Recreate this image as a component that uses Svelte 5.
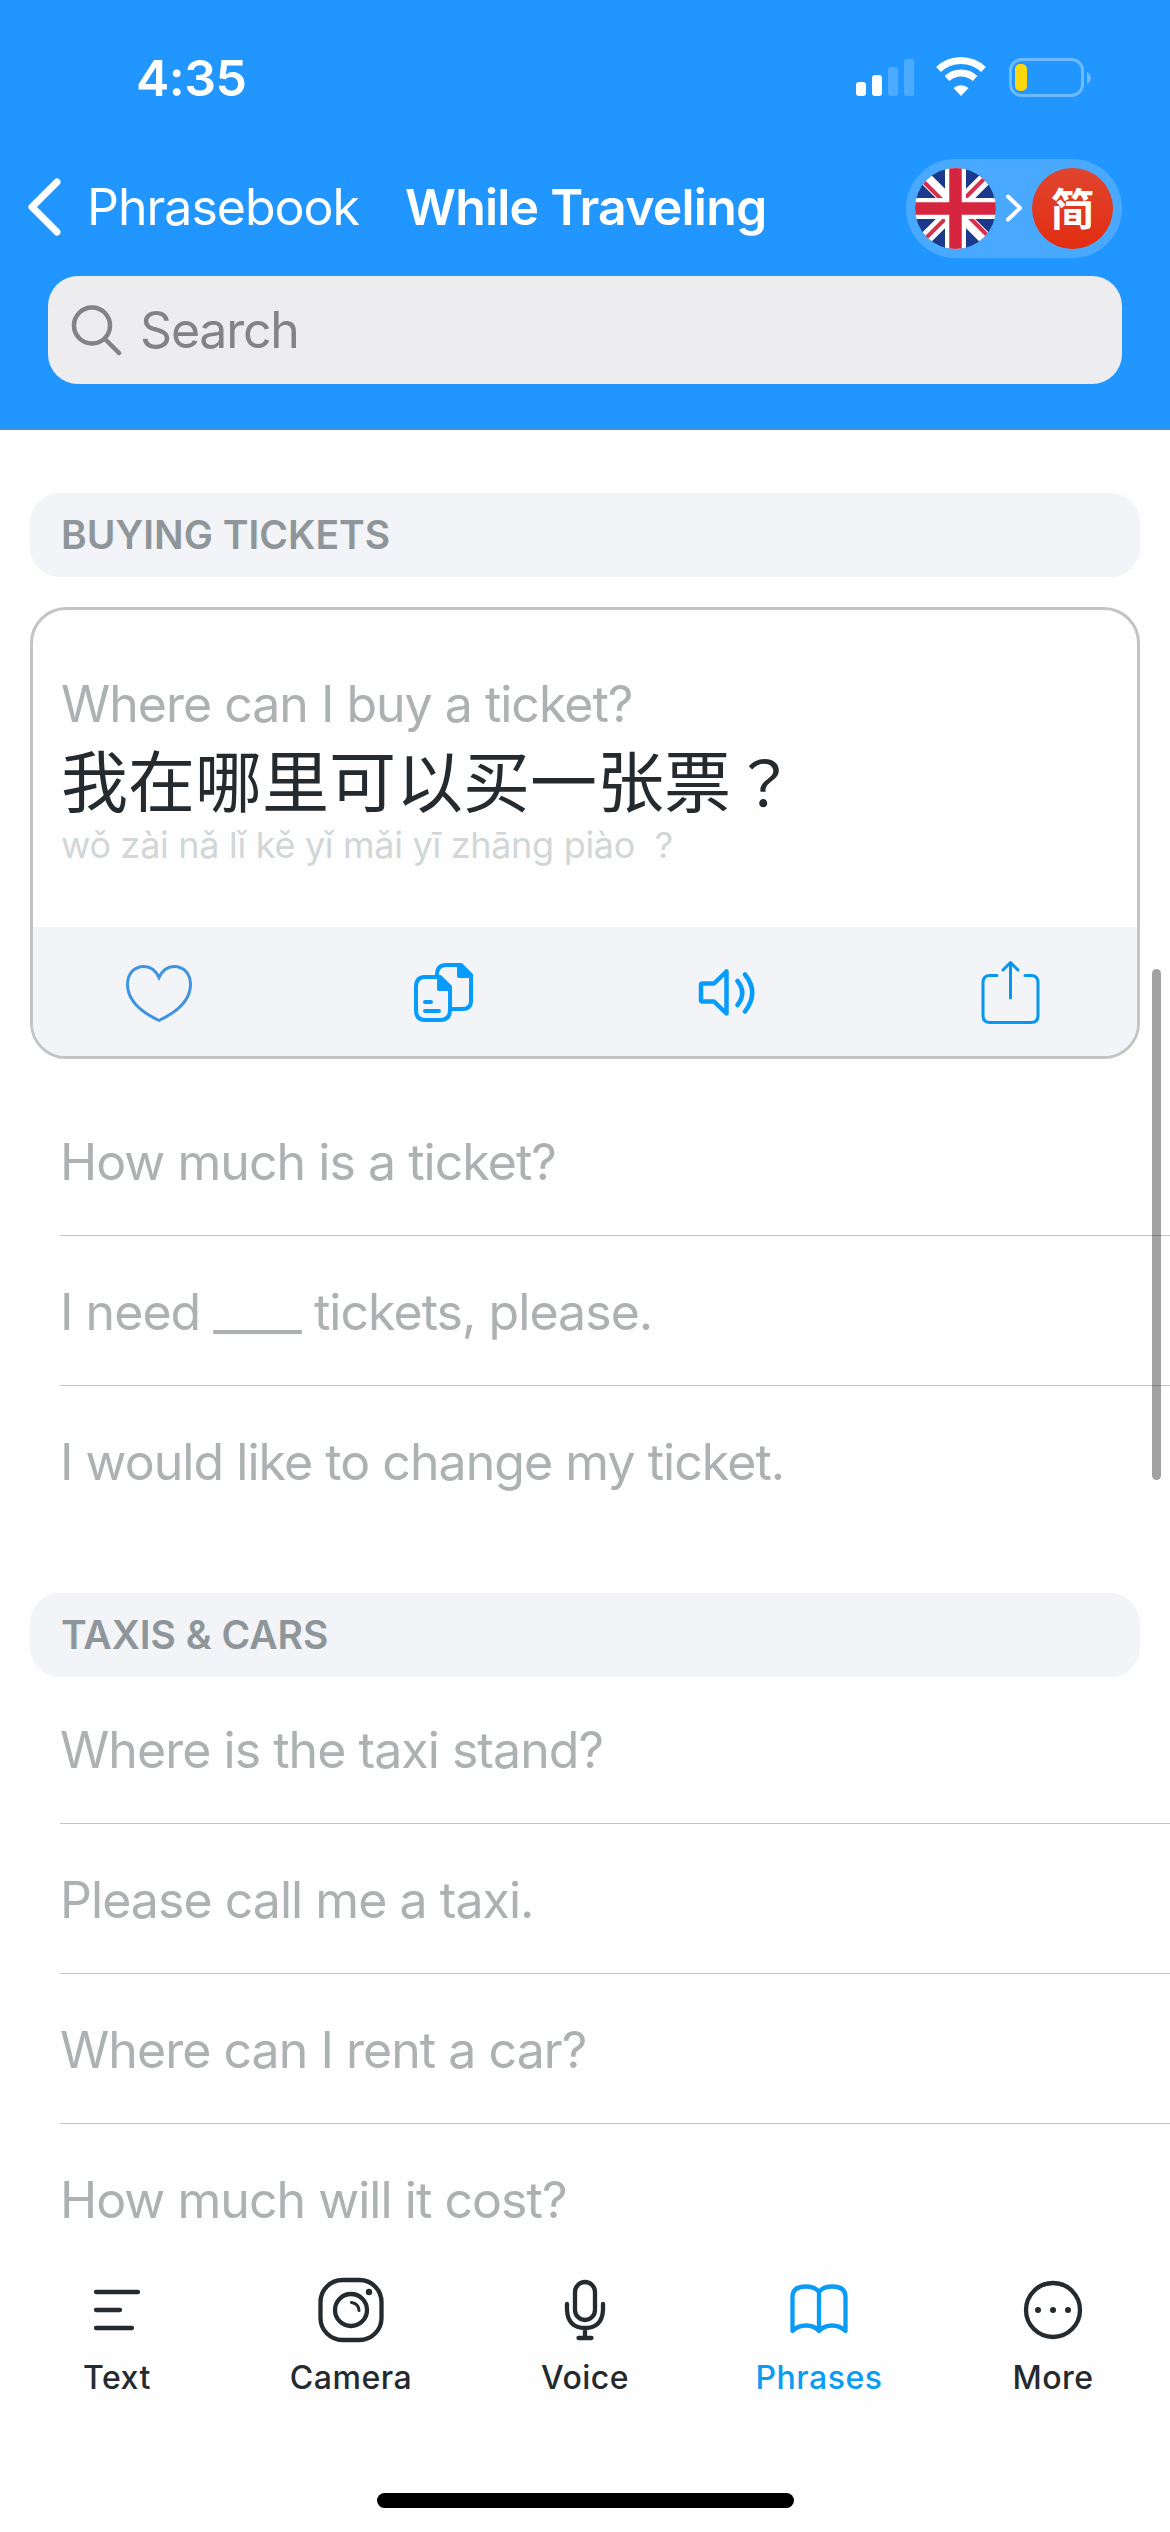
<script>
  const sections = [
    {
      title: 'Buying tickets',
      card: {
        text: 'Where can I buy a ticket?',
        translation: '我在哪里可以买一张票',
        mark: '？',
        pinyin: 'wǒ zài nǎ lǐ kě yǐ mǎi yī zhāng piào\u00a0\u00a0?',
      },
      phrases: ['How much is a ticket?', 'I need ____ tickets, please.', 'I would like to change my ticket.'],
    },
    {
      title: 'Taxis & cars',
      card: null,
      phrases: ['Where is the taxi stand?', 'Please call me a taxi.', 'Where can I rent a car?', 'How much will it cost?'],
    },
  ];

  const tabs = ['Text', 'Camera', 'Voice', 'Phrases', 'More'];
  let activeTab = $state('Phrases');
  let query = $state('');
</script>

<div class="screen">
  <header>
    <div class="status">
      <span class="time">4:35</span>
      <svg class="status-icons" width="240" height="44" viewBox="0 0 240 44">
        <rect x="1" y="26" width="10" height="14" rx="3" fill="#fff" />
        <rect x="17" y="19" width="10" height="21" rx="3" fill="#fff" />
        <rect x="33" y="11" width="10" height="29" rx="3" fill="#4dabff" />
        <rect x="49" y="3" width="10" height="37" rx="3" fill="#4dabff" />
        <g fill="none" stroke="#fff" stroke-width="7">
          <path d="M83.500 13.500a32.500 32.500 0 0 1 45 0" />
          <path d="M92 22.500a20.500 20.500 0 0 1 28 0" />
        </g>
        <path d="M98.500 32a11.500 11.500 0 0 1 15 0l-7.500 8z" fill="#fff" />
        <rect x="155.500" y="3.500" width="72" height="36" rx="11" fill="none" stroke="#6ebaff" stroke-width="3" />
        <path d="M232 16c5 1.500 5 10.500 0 12z" fill="#6ebaff" />
        <rect x="160" y="8" width="12" height="27" rx="5" fill="#ffd60a" />
      </svg>
    </div>

    <nav>
      <button class="back">
        <svg width="40" height="64" viewBox="0 0 40 64">
          <path d="M32 7 7 32l25 25" fill="none" stroke="#fff" stroke-width="7" stroke-linecap="round" stroke-linejoin="round" />
        </svg>
        <span>Phrasebook</span>
      </button>
      <h1>While Traveling</h1>
      <button class="languages" aria-label="Languages">
        <svg width="81" height="81" viewBox="0 0 81 81">
          <clipPath id="round"><circle cx="40.500" cy="40.500" r="40.500" /></clipPath>
          <g clip-path="url(#round)">
            <rect width="81" height="81" fill="#1b3a8c" />
            <path d="M0 0 81 81M81 0 0 81" stroke="#fff" stroke-width="13" />
            <path d="M4 9 32 37M80 0 47 33M1 80 34 47M77 72 49 44" stroke="#d8304a" stroke-width="4" />
            <path d="M40.500 0v81M0 40.500h81" stroke="#fff" stroke-width="21" />
            <path d="M40.500 0v81M0 40.500h81" stroke="#d6263f" stroke-width="12.500" />
          </g>
        </svg>
        <svg width="18" height="30" viewBox="0 0 18 30">
          <path d="M3 2.500l12 11.500L3 25.500" fill="none" stroke="#fff" stroke-width="4" stroke-linecap="round" stroke-linejoin="round" />
        </svg>
        <span class="chinese">简</span>
      </button>
    </nav>

    <label class="search">
      <svg width="52" height="52" viewBox="0 0 52 52" fill="none" stroke="#838387" stroke-width="4.500" stroke-linecap="round">
        <circle cx="21" cy="21.500" r="18" />
        <path d="M34 35l14 14" />
      </svg>
      <input bind:value={query} placeholder="Search" />
    </label>
  </header>

  <main>
    {#each sections as section}
      <section>
        <h2>{section.title}</h2>
        {#if section.card}
          <article>
            <div class="body">
              <p class="question">{section.card.text}</p>
              <p class="translation" lang="zh-CN">{section.card.translation}<span class="mark" lang="ja">{section.card.mark}</span></p>
              <p class="pinyin">{section.card.pinyin}</p>
            </div>
            <div class="actions">
              <svg width="68" height="68" viewBox="0 0 68 68" fill="none" stroke="#3e94de" stroke-width="3">
                <path d="M34 19.500C30 11 24.500 8.500 19 8.500 9 8.500 2.500 16 2.500 26.500 2.500 41 15 53.500 34 62.500 53 53.500 65.500 41 65.500 26.500 65.500 16 59 8.500 49 8.500 43.500 8.500 38 11 34 19.500z" />
              </svg>
              <svg width="68" height="68" viewBox="0 0 68 68" fill="none" stroke="#069cfb" stroke-width="4" stroke-linecap="round" stroke-linejoin="round">
                <path d="M28 18v-1q0-10 9-10h15l10 10v26q0 8-9 8H42" />
                <path d="M50 7v11h12z" fill="#069cfb" />
                <path d="M31 19H16Q7 19 7 29v23q0 10 9 10h15q10 0 10-10V29z" />
                <path d="M30 19v12h11V29z" fill="#069cfb" />
                <path d="M16 44h6M16 53h14" />
              </svg>
              <svg width="68" height="68" viewBox="0 0 68 68" fill="none" stroke="#069cfb" stroke-width="4.500" stroke-linecap="round" stroke-linejoin="round">
                <path d="M10.500 25.500H22L34.500 13.500v42L22 43.500H10.500q-1.500 0-1.500-1.500V27q0-1.500 1.500-1.500z" />
                <path d="M45.500 23q9.500 12 0 24M53 16.500q14.500 18 0 37" />
              </svg>
              <svg width="68" height="68" viewBox="0 0 68 68" fill="none" stroke="#0797ee" stroke-width="3" stroke-linecap="round" stroke-linejoin="round">
                <path d="M21 17.500h-7q-7 0-7 7v33q0 7 7 7h41q7 0 7-7v-33q0-7-7-7h-6" />
                <path d="M34.500 40V5M27 12l7.500-7.500 7.500 7.500" />
              </svg>
            </div>
          </article>
        {/if}
        <ul>
          {#each section.phrases as phrase}
            <li>{phrase}</li>
          {/each}
        </ul>
      </section>
    {/each}
    <div class="scrollbar"></div>
  </main>

  <footer>
    <div class="tabs">
      {#each tabs as tab}
        <button class:active={tab === activeTab} onclick={() => (activeTab = tab)}>
          <svg width="70" height="70" viewBox="0 0 70 70" fill="none" stroke="currentColor" stroke-width="4.300" stroke-linecap="round" stroke-linejoin="round">
            {#if tab === 'Text'}
              <path d="M14 17h42M14 35h24M14 53h36" />
            {:else if tab === 'Camera'}
              <rect x="4.500" y="5" width="61" height="60" rx="22" />
              <circle cx="35" cy="35" r="16" />
              <path d="M35.500 27.500q7 1 7.500 8" stroke-width="3" />
              <circle cx="53" cy="17" r="3.200" fill="currentColor" stroke="none" />
            {:else if tab === 'Voice'}
              <rect x="25" y="7" width="20" height="38" rx="10" />
              <path d="M17 29v6q1 18 18 18t18-18v-6M35 54v9M28.500 63h13" />
            {:else if tab === 'Phrases'}
              <path d="M35 17q-4-5.500-13-5.500-13.500 0-13.500 10V56q5-5.500 13.500-5.500T35 56q5-5.500 13-5.500T61.500 56V21.500q0-10-13.500-10-9 0-13 5.500v39" />
            {:else}
              <circle cx="35" cy="35" r="27" />
              <g fill="currentColor" stroke="none">
                <circle cx="20" cy="35" r="3" />
                <circle cx="35" cy="35" r="3" />
                <circle cx="50" cy="35" r="3" />
              </g>
            {/if}
          </svg>
          <span>{tab}</span>
        </button>
      {/each}
    </div>
    <div class="home"></div>
  </footer>
</div>

<style>
  :global(body) {
    margin: 0;
    background: #fff;
  }

  .screen {
    display: flex;
    flex-direction: column;
    width: 1170px;
    height: 2532px;
    overflow: hidden;
    background: #fefefe;
    color: #242a2e;
    font-family: Inter, 'Noto Sans CJK SC', sans-serif;
  }

  button {
    border: 0;
    padding: 0;
    background: none;
    color: inherit;
    font: inherit;
  }

  header {
    box-sizing: border-box;
    flex: none;
    height: 430px;
    border-bottom: 2px solid #4391e0;
    background: #2196ff;
    color: #fff;
  }

  .status {
    display: flex;
    justify-content: space-between;
    align-items: center;
    height: 156px;
    padding: 0 75px 0 136px;
  }

  .time {
    font-size: 50px;
    font-weight: 600;
    letter-spacing: -0.5px;
  }

  nav {
    display: grid;
    grid-template-columns: 405px 1fr auto;
    align-items: center;
    height: 105px;
    padding-right: 48px;
  }

  .back {
    display: flex;
    align-items: center;
    gap: 22px;
    padding: 0 0 4px 25px;
    font-size: 50px;
    letter-spacing: -1px;
  }

  h1 {
    margin: 0;
    padding-bottom: 4px;
    font-size: 50px;
    font-weight: 600;
    letter-spacing: -0.8px;
    white-space: nowrap;
  }

  .languages {
    display: flex;
    align-items: center;
    justify-content: space-between;
    box-sizing: border-box;
    width: 216px;
    height: 99px;
    padding: 0 9px;
    border-radius: 50px;
    background: #48a9ff;
  }

  .chinese {
    width: 81px;
    height: 81px;
    border-radius: 50%;
    background: linear-gradient(#e0452f, #e22c10);
    font: bold 44px/79px 'Noto Sans CJK SC', sans-serif;
    text-align: center;
  }

  .search {
    display: flex;
    align-items: center;
    gap: 17px;
    height: 108px;
    margin: 15px 48px 0;
    padding-left: 23px;
    border-radius: 30px;
    background: #ededef;
  }

  input {
    flex: 1;
    border: 0;
    padding: 0;
    outline: 0;
    background: none;
    font: 50px Inter, sans-serif;
    letter-spacing: -1.200px;
  }

  input::placeholder {
    color: #838387;
    opacity: 1;
  }

  main {
    position: relative;
    flex: 1;
    min-height: 0;
    overflow: hidden;
    padding-top: 63px;
  }

  h2 {
    height: 84px;
    margin: 0 30px;
    padding-left: 31px;
    border-radius: 30px;
    background: #f2f4f8;
    color: #8f9699;
    font-size: 39px;
    font-weight: 600;
    line-height: 84px;
    text-transform: uppercase;
  }

  article {
    display: flex;
    flex-direction: column;
    box-sizing: border-box;
    height: 452px;
    margin: 30px 30px 0;
    border: 3px solid #c3c4c6;
    border-radius: 36px;
    overflow: hidden;
  }

  .body {
    flex: 1;
    padding: 64px 28px 0;
  }

  p {
    margin: 0;
    white-space: nowrap;
  }

  .question {
    color: #adb1b1;
    font-size: 50px;
    line-height: 60px;
    letter-spacing: -1px;
  }

  .translation {
    font-family: 'Noto Sans CJK SC', sans-serif;
    font-size: 67px;
    line-height: 88px;
  }

  /* centred in its cell, unlike the mainland form */
  .mark {
    font-family: 'Noto Sans CJK TC', sans-serif;
    font-size: 62px;
    line-height: 1;
    margin-left: 2px;
  }

  .pinyin {
    padding-top: 1px;
    color: #d2d6d6;
    font-size: 36px;
    line-height: 44px;
    letter-spacing: -0.300px;
  }

  .actions {
    display: flex;
    align-items: center;
    justify-content: space-between;
    height: 129px;
    padding: 0 93px 0 92px;
    background: #f2f4f8;
  }

  ul {
    margin: -3px 0 0;
    padding: 0 0 0 60px;
    list-style: none;
  }

  article + ul {
    margin-top: 0;
    padding-top: 27px;
    padding-bottom: 57px;
  }

  li {
    box-sizing: border-box;
    height: 150px;
    padding-top: 2px;
    border-bottom: 1px solid #c4c4c7;
    color: #adb1b1;
    font-size: 50px;
    line-height: 148px;
    letter-spacing: -0.950px;
  }

  li:last-child {
    border-bottom: 0;
  }

  .scrollbar {
    position: absolute;
    top: 539px;
    right: 9px;
    width: 9px;
    height: 511px;
    border-radius: 5px;
    background: #000;
    opacity: 0.36;
  }

  footer {
    flex: none;
    height: 294px;
    background: #fefefe;
  }

  .tabs {
    display: grid;
    grid-template-columns: repeat(5, 1fr);
    padding-top: 37px;
  }

  .tabs button {
    display: flex;
    flex-direction: column;
    align-items: center;
    gap: 13px;
    font-size: 32px;
    font-weight: 500;
    line-height: 40px;
    letter-spacing: 0.5px;
  }

  .tabs .active {
    color: #0a9bf5;
  }

  .home {
    width: 417px;
    height: 15px;
    margin: 95px auto 0;
    border-radius: 8px;
    background: #000;
  }
</style>
